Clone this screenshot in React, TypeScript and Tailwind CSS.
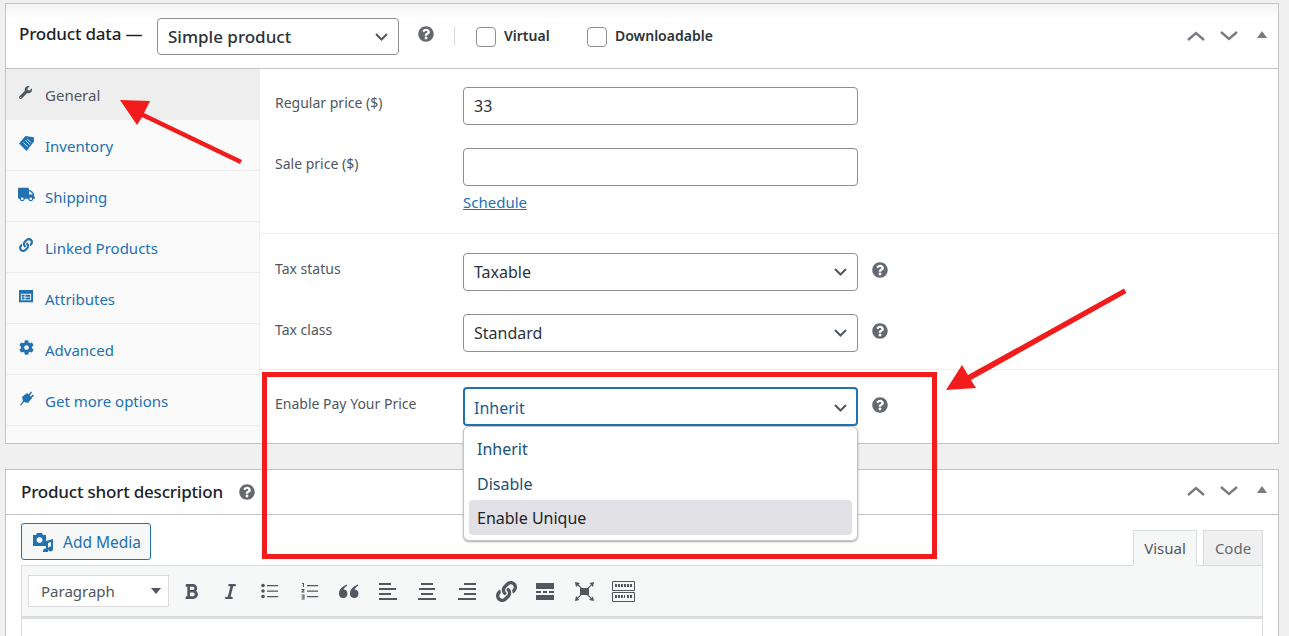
import { FaLink, FaQuestionCircle, FaTruck, FaWrench, FaCog, FaBold, FaItalic } from "react-icons/fa";

const blue = "text-[#2271b1]";

const InventoryIcon = () => (
  <svg viewBox="0 0 16 16" className="w-[17px] h-[17px] -ml-px" fill="currentColor">
    <path d="M7 1 L15 2 L15 6 L8 15 L1 8 Z" />
    <path d="M5 7 L9 11 M7 5 L11 9 M9 4 L12 7" stroke="#fff" strokeWidth="0.8" />
  </svg>
);

const AttributesIcon = () => (
  <svg viewBox="0 0 16 16" className="w-[15px] h-[15px]" fill="currentColor">
    <path fillRule="evenodd" d="M0 1h15v13H0z M2 5v7h11V5z M3 6h3v2H3z M7 6h5v2H7z M3 9h3v2H3z M7 9h5v2H7z" />
    <path d="M3 6h2v2H3zM3 9h2v2H3zM7 7h5v1H7zM7 10h5v1H7z" />
  </svg>
);

const PlugIcon = () => (
  <svg viewBox="0 0 16 16" className="w-4 h-4" fill="currentColor">
    <path d="M1 15 L4 11 L3 7 L8 3 L13 8 L9 13 L5 12 L2 15.5 Z" />
    <path d="M8 6 L12 1.5 L13 2.5 L9.5 7 Z M10 8 L14 4.5 L15 5.5 L11 9.5 Z" />
  </svg>
);

const tabs = [
  { label: "General", icon: <FaWrench className="w-[13px] h-[13px]" />, active: true },
  { label: "Inventory", icon: <InventoryIcon /> },
  { label: "Shipping", icon: <FaTruck className="w-[17px] h-[17px] -ml-px" /> },
  { label: "Linked Products", icon: <FaLink className="w-[14px] h-[14px]" /> },
  { label: "Attributes", icon: <AttributesIcon /> },
  { label: "Advanced", icon: <FaCog className="w-[15px] h-[15px]" /> },
  { label: "Get more options", icon: <PlugIcon /> },
];

const Help = () => <FaQuestionCircle className="w-[16px] h-[16px] text-[#646970] shrink-0" />;

const SelectCaret = () => (
  <svg viewBox="0 0 13 8" className="w-[13px] h-[8px] text-[#50575e]" fill="none" stroke="currentColor" strokeWidth="2">
    <path d="M1 1l5.5 5.5L12 1" />
  </svg>
);

const Field = ({ label, value, select, focus }: { label: string; value?: string; select?: boolean; focus?: boolean }) => (
  <div className="flex items-start">
    <div className={`w-[203px] pl-[15px] text-[14px] leading-[20px] text-[#50575e] ${focus ? "pt-[7px]" : "pt-[6px]"}`}>{label}</div>
    <div
      className={`w-[395px] rounded-[4px] bg-white flex items-center justify-between text-[16px] ${
        focus
          ? "h-[39px] pl-[9px] pr-[9px] pt-[2px] border-2 border-[#2271b1] text-[#135e96]"
          : "h-[38px] pl-[10px] pr-[10px] border border-[#8c8f94] text-[#2c3338]"
      }`}
    >
      <span>{value}</span>
      {select && <SelectCaret />}
    </div>
    {select && (
      <div className={`ml-[14px] ${focus ? "pt-[10px]" : "pt-[9px]"}`}>
        <Help />
      </div>
    )}
  </div>
);

const PanelControls = () => (
  <div className="flex items-center text-[#787c82]">
    <svg viewBox="0 0 18 10" className="w-[18px] h-[10px]" fill="none" stroke="currentColor" strokeWidth="2.4">
      <path d="M1 9l8-7 8 7" />
    </svg>
    <svg viewBox="0 0 18 10" className="w-[18px] h-[10px] ml-[15px]" fill="none" stroke="currentColor" strokeWidth="2.4">
      <path d="M1 1l8 7 8-7" />
    </svg>
    <div className="ml-[19px] -mt-[3px] w-0 h-0 border-x-[5px] border-x-transparent border-b-[7px] border-b-[#787c82]" />
  </div>
);

const Lines = ({ variant }: { variant: "left" | "center" | "right" }) => {
  const rows =
    variant === "left"
      ? ["M0 1h12", "M0 6h17", "M0 11h12", "M0 16h18"]
      : variant === "center"
        ? ["M3 1h12", "M1 6h16", "M3 11h12", "M0 16h18"]
        : ["M6 1h12", "M1 6h17", "M6 11h12", "M0 16h18"];
  return (
    <svg viewBox="0 0 18 17" className="w-[18px] h-[17px]" stroke="#50575e" strokeWidth="2">
      {rows.map((d) => (
        <path key={d} d={d} />
      ))}
    </svg>
  );
};

const ToolIcon = ({ children }: { children: React.ReactNode }) => (
  <div className="w-[39.3px] flex justify-center">{children}</div>
);

const Toolbar = () => (
  <div className="h-[53px] bg-[#f6f7f7] border-b-[3px] border-[#dcdcde] flex items-center pl-[6px]">
    <div className="w-[141px] h-[32px] bg-white border border-[#dcdcde] flex items-center justify-between pl-[12px] pr-[7px] text-[15px] text-[#50575e]">
      <span className="pt-[1px]">Paragraph</span>
      <div className="w-0 h-0 border-x-[5px] border-x-transparent border-t-[6px] border-t-[#50575e]" />
    </div>
    <div className="flex items-center ml-[3px] text-[#50575e]">
      <ToolIcon>
        <FaBold className="w-[15px] h-[17px]" />
      </ToolIcon>
      <ToolIcon>
        <FaItalic className="w-[15px] h-[17px]" />
      </ToolIcon>
      <ToolIcon>
        <svg viewBox="0 0 18 16" className="w-[18px] h-[16px]" fill="currentColor">
          <circle cx="2" cy="2.5" r="1.8" />
          <circle cx="2" cy="8" r="1.8" />
          <circle cx="2" cy="13.5" r="1.8" />
          <path d="M6 2h11v1.3H6zM6 7.5h11v1.3H6zM6 13h11v1.3H6z" />
        </svg>
      </ToolIcon>
      <ToolIcon>
        <svg viewBox="0 0 18 18" className="w-[18px] h-[18px]" fill="currentColor">
          <path d="M6 3h11v1.3H6zM6 8.5h11v1.3H6zM6 14h11v1.3H6z" />
          <path d="M1 1h2v4H2V2H1zM0.5 7h3v1L2 9.5h1.5v1h-3v-1L2 8H0.5zM0.5 12.5h3v5h-3v-1h2v-1h-2v-1h2v-1h-2z" />
        </svg>
      </ToolIcon>
      <ToolIcon>
        <svg viewBox="0 0 20 14" className="w-[20px] h-[14px]" fill="currentColor">
          <path d="M8 0.5C3.5 2 0 5.5 0 9.5a4.2 4.2 0 1 0 4.5-4C5 4 6.5 2.5 8 2z" />
          <path d="M19 0.5C14.5 2 11 5.5 11 9.5a4.2 4.2 0 1 0 4.5-4C16 4 17.5 2.5 19 2z" />
        </svg>
      </ToolIcon>
      <ToolIcon>
        <Lines variant="left" />
      </ToolIcon>
      <ToolIcon>
        <Lines variant="center" />
      </ToolIcon>
      <ToolIcon>
        <Lines variant="right" />
      </ToolIcon>
      <ToolIcon>
        <FaLink className="w-[21px] h-[21px]" />
      </ToolIcon>
      <ToolIcon>
        <svg viewBox="0 0 18 17" className="w-[18px] h-[17px]" fill="currentColor">
          <path d="M0 0h18v6H0zM0 8h5v2H0zM7 8h4v2H7zM13 8h5v2h-5zM0 12h18v5H0z" />
        </svg>
      </ToolIcon>
      <ToolIcon>
        <svg viewBox="0 0 21 21" className="w-[21px] h-[21px]" fill="currentColor">
          <path d="M6 7h9v7H6z" />
          <path d="M1 1l5 1-1.5 1.5L8 7H6.5L3.5 4.5 2 6z M20 1l-1 5-1.5-1.5L14 8V6.5l3-3L15.5 2z M1 20l1-5 1.5 1.5L7 13v1.5l-3 3 1.5 1.5z M20 20l-5-1 1.5-1.5L13 14h1.5l3 3 1.5-1.5z" />
        </svg>
      </ToolIcon>
      <ToolIcon>
        <svg viewBox="0 0 23 21" className="w-[23px] h-[21px]" fill="none" stroke="currentColor">
          <path d="M0.5 0.5h22v9h-22zM0.5 11.5h22v9h-22z" />
          <path d="M3 4.5h17M3 15.5h10M15 15.5h5" strokeWidth="3" strokeDasharray="2 1" />
        </svg>
      </ToolIcon>
    </div>
  </div>
);

export default function App() {
  return (
    <div className="relative w-[1289px] h-[636px] overflow-hidden bg-[#f0f0f1] pt-[3px] px-[5px] font-['Noto_Sans',sans-serif]">
      {/* Product data panel */}
      <div className="w-[1274px] h-[441px] border border-[#c3c4c7] bg-white flex flex-col">
        <div className="h-[65px] shrink-0 border-b border-[#c3c4c7] flex items-center pl-[13px] pr-[11px] bg-gradient-to-b from-[#f4f4f4] to-white to-[25%]">
          <span className="w-[138px] text-[17px] tracking-[-0.2px] font-medium text-[#1d2327] -mt-[4px]">Product data —</span>
          <div className="w-[242px] h-[37px] mt-[1px] rounded-[4px] border border-[#8c8f94] bg-white flex items-center justify-between pl-[10px] pr-[10px] text-[17px] font-medium text-[#2c3338]">
            Simple product
            <SelectCaret />
          </div>
          <div className="ml-[19px] -mt-[4px]">
            <Help />
          </div>
          <div className="w-px h-[20px] bg-[#dcdcde] ml-[20px]" />
          <div className="ml-[21px] w-[20px] h-[20px] rounded-[4px] border border-[#8c8f94] mt-[2px]" />
          <span className="ml-[8px] w-[45px] text-[14px] font-semibold text-[#2c3338] -mt-[2px]">Virtual</span>
          <div className="ml-[38px] w-[20px] h-[20px] rounded-[4px] border border-[#8c8f94] mt-[2px]" />
          <span className="ml-[8px] text-[14px] font-semibold text-[#2c3338] -mt-[2px]">Downloadable</span>
          <div className="ml-auto">
            <PanelControls />
          </div>
        </div>
        <div className="flex flex-1">
          <div className="w-[254px] shrink-0 bg-[#fafafa] border-r border-[#eeeeee]">
            {tabs.map((t) => (
              <div
                key={t.label}
                className={`h-[51px] flex items-center border-b border-[#eeeeee] ${t.active ? "bg-[#eeeeee] text-[#50575e]" : blue}`}
              >
                <div className="w-[39px] pl-[13px] pb-[4px] flex">{t.icon}</div>
                <span className="text-[15px] pt-[2px]">{t.label}</span>
              </div>
            ))}
          </div>
          <div className="flex-1">
            <div className="h-[165px] border-b border-[#eeeeee] pt-[18px]">
              <Field label="Regular price ($)" value="33" />
              <div className="h-[23px]" />
              <Field label="Sale price ($)" />
              <a className={`block ml-[203px] mt-[5px] text-[15px] underline ${blue}`}>Schedule</a>
            </div>
            <div className="h-[136px] border-b border-[#eeeeee] pt-[19px]">
              <Field label="Tax status" value="Taxable" select />
              <div className="h-[23px]" />
              <Field label="Tax class" value="Standard" select />
            </div>
            <div className="pt-[17px]">
              <Field label="Enable Pay Your Price" value="Inherit" select focus />
            </div>
          </div>
        </div>
      </div>

      {/* Short description panel */}
      <div className="mt-[25px] w-[1274px] h-[180px] border border-[#c3c4c7] bg-white">
        <div className="h-[45px] border-b border-[#c3c4c7] flex items-center pl-[15px] pr-[11px]">
          <span className="w-[203px] text-[17px] tracking-[-0.2px] font-medium text-[#1d2327]">Product short description</span>
          <div className="ml-[15px]">
            <Help />
          </div>
          <div className="ml-auto -mt-[2px]">
            <PanelControls />
          </div>
        </div>
        <div className="px-[15px] pt-[8px]">
          <div className="flex items-end justify-between">
            <div className="mb-[5px] w-[130px] h-[37px] rounded-[3px] border border-[#2271b1] bg-[#f6f7f7] flex items-center pl-[10px] gap-[9px] text-[15.5px] text-[#2271b1]">
              <svg viewBox="0 0 22 20" className="w-[22px] h-[20px]" fill="currentColor">
                <path fillRule="evenodd" d="M1 3h3l1-2h5l1 2h3v11H1z M7.5 5a3 3 0 1 0 .01 0z" />
                <path d="M14 9l7-2v10a2.5 2.5 0 1 1-2-2.4V10l-3 .9V19a2.5 2.5 0 1 1-2-2.4z" />
              </svg>
              <span className="pt-[2px]">Add Media</span>
            </div>
            <div className="flex items-end gap-[6px]">
              <div className="w-[64px] h-[36px] -mb-px relative border border-[#dcdcde] border-b-[#f6f7f7] bg-[#f6f7f7] flex items-center justify-center text-[15px] text-[#50575e]">
                Visual
              </div>
              <div className="w-[60px] h-[35px] border border-[#dcdcde] border-b-0 bg-[#f0f0f1] flex items-center justify-center text-[15px] text-[#646970]">
                Code
              </div>
            </div>
          </div>
          <div className="border border-[#dcdcde] w-[1242px] h-[80px]">
            <Toolbar />
          </div>
        </div>
      </div>

      {/* Open dropdown */}
      <div className="absolute left-[463px] top-[426px] w-[395px] h-[115px] rounded-[6px] bg-white border border-[#c3c4c7] shadow-[0_1px_2px_rgba(0,0,0,0.35)] px-[5px] pt-[4px] text-[16px] text-[#1a4f7a]">
        <div className="h-[35px] flex items-center pl-[8px]">Inherit</div>
        <div className="h-[34px] flex items-center pl-[8px] pt-[2px]">Disable</div>
        <div className="h-[35px] flex items-center pl-[8px] rounded-[4px] bg-[#e1e0e5] text-[#1d2327]">Enable Unique</div>
      </div>

      {/* Red annotations */}
      <div className="absolute left-[262px] top-[372px] w-[675px] h-[187px] border-[5px] border-[#f21c1c]" />
      <svg className="absolute left-0 top-0 pointer-events-none" width="1289" height="636" fill="#f21c1c">
        <path d="M120 100 L150 101 L144 113 L242 160 L240 164 L142 117 L137 125 Z" />
        <path d="M946 390 L962 365 L968 375 L1124 288.5 L1126.500 293 L971 380 L976 388 Z" />
      </svg>
    </div>
  );
}
